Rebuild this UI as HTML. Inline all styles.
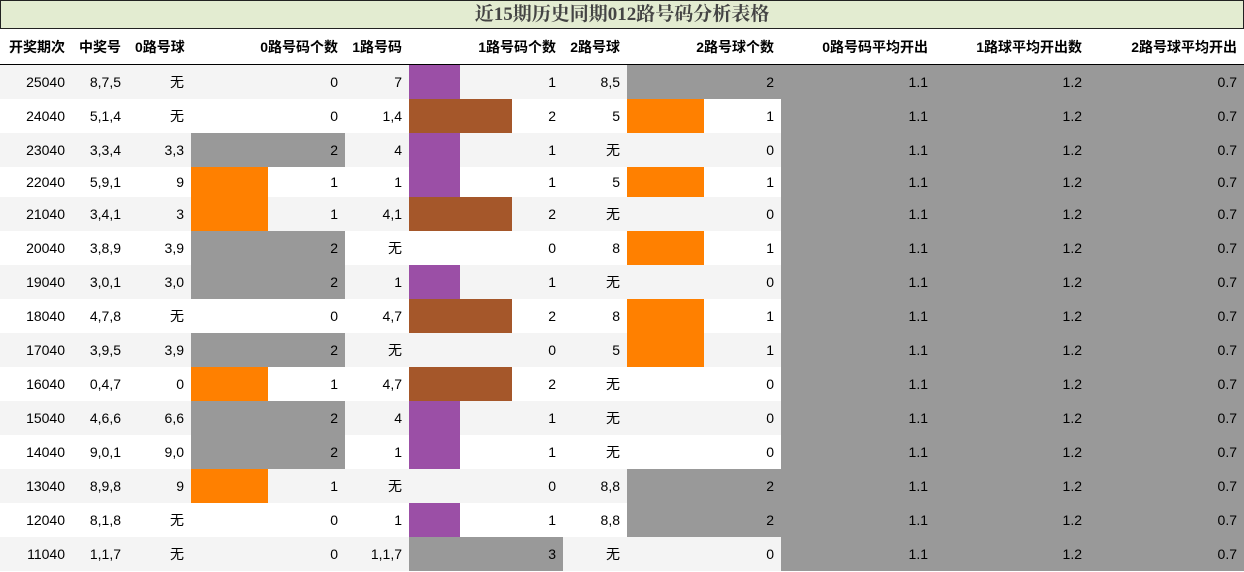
<!DOCTYPE html>
<html><head><meta charset="utf-8"><style>
body{margin:0;width:1244px;height:572px;overflow:hidden;background:#fff;font-family:"Liberation Sans","Noto Sans CJK SC",sans-serif;font-size:14px;color:#000}
.t{height:27px;border:1px solid #222;background:#e3ecd1;text-align:center;font:bold 19px/28px "Liberation Serif","Noto Serif CJK SC",serif;color:#444}
table{border-collapse:collapse;table-layout:fixed;width:1244px}
td,th{padding:0 7px;text-align:right;white-space:nowrap;overflow:hidden}
th{height:35px;font-weight:bold;border-bottom:1px solid #000}
td{height:34px}
tr.s td{height:30px}
tr.o{background:#f4f4f4}
.g{background:#999}
.o1{background:linear-gradient(to right,#ff8000 77px,transparent 77px)}
.p1{background:linear-gradient(to right,#9b4fa6 51px,transparent 51px)}
.b2{background:linear-gradient(to right,#a5572a 103px,transparent 103px)}
</style></head><body>
<div class="t">近15期历史同期012路号码分析表格</div>
<table>
<colgroup><col style="width:72px"><col style="width:56px"><col style="width:63px"><col style="width:154px"><col style="width:64px"><col style="width:154px"><col style="width:64px"><col style="width:154px"><col style="width:154px"><col style="width:154px"><col style="width:155px"></colgroup>
<tr><th>开奖期次</th><th>中奖号</th><th>0路号球</th><th>0路号码个数</th><th>1路号码</th><th>1路号码个数</th><th>2路号球</th><th>2路号球个数</th><th>0路号码平均开出</th><th>1路球平均开出数</th><th>2路号球平均开出</th></tr>
<tr class="o"><td>25040</td><td>8,7,5</td><td>无</td><td>0</td><td>7</td><td class="p1">1</td><td>8,5</td><td class="g">2</td><td class="g">1.1</td><td class="g">1.2</td><td class="g">0.7</td></tr>
<tr><td>24040</td><td>5,1,4</td><td>无</td><td>0</td><td>1,4</td><td class="b2">2</td><td>5</td><td class="o1">1</td><td class="g">1.1</td><td class="g">1.2</td><td class="g">0.7</td></tr>
<tr class="o"><td>23040</td><td>3,3,4</td><td>3,3</td><td class="g">2</td><td>4</td><td class="p1">1</td><td>无</td><td>0</td><td class="g">1.1</td><td class="g">1.2</td><td class="g">0.7</td></tr>
<tr class="s"><td>22040</td><td>5,9,1</td><td>9</td><td class="o1">1</td><td>1</td><td class="p1">1</td><td>5</td><td class="o1">1</td><td class="g">1.1</td><td class="g">1.2</td><td class="g">0.7</td></tr>
<tr class="o"><td>21040</td><td>3,4,1</td><td>3</td><td class="o1">1</td><td>4,1</td><td class="b2">2</td><td>无</td><td>0</td><td class="g">1.1</td><td class="g">1.2</td><td class="g">0.7</td></tr>
<tr><td>20040</td><td>3,8,9</td><td>3,9</td><td class="g">2</td><td>无</td><td>0</td><td>8</td><td class="o1">1</td><td class="g">1.1</td><td class="g">1.2</td><td class="g">0.7</td></tr>
<tr class="o"><td>19040</td><td>3,0,1</td><td>3,0</td><td class="g">2</td><td>1</td><td class="p1">1</td><td>无</td><td>0</td><td class="g">1.1</td><td class="g">1.2</td><td class="g">0.7</td></tr>
<tr><td>18040</td><td>4,7,8</td><td>无</td><td>0</td><td>4,7</td><td class="b2">2</td><td>8</td><td class="o1">1</td><td class="g">1.1</td><td class="g">1.2</td><td class="g">0.7</td></tr>
<tr class="o"><td>17040</td><td>3,9,5</td><td>3,9</td><td class="g">2</td><td>无</td><td>0</td><td>5</td><td class="o1">1</td><td class="g">1.1</td><td class="g">1.2</td><td class="g">0.7</td></tr>
<tr><td>16040</td><td>0,4,7</td><td>0</td><td class="o1">1</td><td>4,7</td><td class="b2">2</td><td>无</td><td>0</td><td class="g">1.1</td><td class="g">1.2</td><td class="g">0.7</td></tr>
<tr class="o"><td>15040</td><td>4,6,6</td><td>6,6</td><td class="g">2</td><td>4</td><td class="p1">1</td><td>无</td><td>0</td><td class="g">1.1</td><td class="g">1.2</td><td class="g">0.7</td></tr>
<tr><td>14040</td><td>9,0,1</td><td>9,0</td><td class="g">2</td><td>1</td><td class="p1">1</td><td>无</td><td>0</td><td class="g">1.1</td><td class="g">1.2</td><td class="g">0.7</td></tr>
<tr class="o"><td>13040</td><td>8,9,8</td><td>9</td><td class="o1">1</td><td>无</td><td>0</td><td>8,8</td><td class="g">2</td><td class="g">1.1</td><td class="g">1.2</td><td class="g">0.7</td></tr>
<tr><td>12040</td><td>8,1,8</td><td>无</td><td>0</td><td>1</td><td class="p1">1</td><td>8,8</td><td class="g">2</td><td class="g">1.1</td><td class="g">1.2</td><td class="g">0.7</td></tr>
<tr class="o"><td>11040</td><td>1,1,7</td><td>无</td><td>0</td><td>1,1,7</td><td class="g">3</td><td>无</td><td>0</td><td class="g">1.1</td><td class="g">1.2</td><td class="g">0.7</td></tr>
</table>
</body></html>
